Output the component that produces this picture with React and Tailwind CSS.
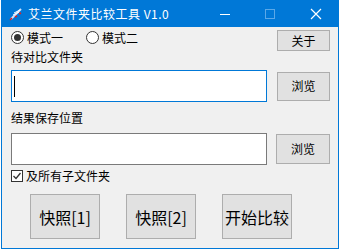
import React from 'react';

const font = { fontFamily: '"Noto Sans CJK SC", "Noto Sans", sans-serif' };

const Btn = ({ className, children }) => (
  <div className={`flex items-center justify-center bg-[#e1e1e1] border border-[#adadad] text-black ${className}`}>
    {children}
  </div>
);

const App = () => {
  return (
    <div className="w-[342px] h-[252px] bg-white pl-[1px]" style={font}>
      <div className="w-[338px] h-[249px] border border-[#0078d7] bg-[#f0f0f0] flex flex-col">
        {/* title bar */}
        <div className="h-[26px] bg-[#0078d7] flex items-center text-white">
          <svg width="14" height="14" viewBox="0 0 14 14" className="ml-[7px]">
            <path d="M2 12 L12 2" stroke="#cfe3ff" strokeWidth="2" />
            <path d="M5 6 L11 3 M4 8 L10 5" stroke="#ffffff" strokeWidth="1" />
            <path d="M1 13 L3 11 M6 10 L8 9 M10 7 L12 6" stroke="#e02020" strokeWidth="1.5" />
          </svg>
          <span className="ml-[5px] text-[12px] leading-[12px] tracking-[0.5px]">艾兰文件夹比较工具 V1.0</span>
          <div className="ml-auto flex items-center">
            <div className="w-[10px] h-[1px] bg-white mr-[35px]"></div>
            <div className="w-[10px] h-[10px] border border-[#5aa8e8] mr-[35px]"></div>
            <svg width="12" height="12" viewBox="0 0 12 12" className="mr-[16px]">
              <path d="M1 1 L11 11 M11 1 L1 11" stroke="#fff" strokeWidth="1.2" />
            </svg>
          </div>
        </div>

        {/* body */}
        <div className="flex-1 pl-[9px] pr-[8px] text-[12px] leading-[12px] text-black">
          <div className="flex justify-between mt-[3px]">
            <div className="flex flex-col">
              <div className="flex items-center mt-[1px]">
                <div className="w-[13px] h-[13px] rounded-full border border-[#333] bg-white flex items-center justify-center">
                  <div className="w-[7px] h-[7px] rounded-full bg-[#333]"></div>
                </div>
                <span className="ml-[3px]">模式一</span>
                <div className="ml-[23px] w-[13px] h-[13px] rounded-full border border-[#333] bg-white"></div>
                <span className="ml-[3px]">模式二</span>
              </div>
              <span className="mt-[7px]">待对比文件夹</span>
            </div>
            <Btn className="w-[53px] h-[21px]">关于</Btn>
          </div>

          <div className="flex items-center justify-between mt-[7px]">
            <div className="w-[256px] h-[32px] border border-[#0078d7] bg-white flex items-center">
              <div className="ml-[2px] w-[1px] h-[21px] bg-black"></div>
            </div>
            <Btn className="w-[53px] h-[29px]">浏览</Btn>
          </div>

          <div className="mt-[10px]">结果保存位置</div>

          <div className="flex items-center justify-between mt-[9px]">
            <div className="w-[256px] h-[32px] border border-[#7a7a7a] bg-white"></div>
            <Btn className="w-[54px] h-[30px]">浏览</Btn>
          </div>

          <div className="flex items-center mt-[5px]">
            <div className="w-[12px] h-[12px] border border-[#333] bg-white flex items-center justify-center">
              <svg width="10" height="10" viewBox="0 0 10 10">
                <path d="M1.5 5 L4 7.5 L8.5 2" stroke="#333" strokeWidth="1.3" fill="none" />
              </svg>
            </div>
            <span className="ml-[3px]">及所有子文件夹</span>
          </div>

          <div className="flex mt-[12px] ml-[19px] gap-[26px]">
            <Btn className="w-[70px] h-[45px] text-[16px]">快照[1]</Btn>
            <Btn className="w-[70px] h-[45px] text-[16px]">快照[2]</Btn>
            <Btn className="w-[70px] h-[45px] text-[16px]">开始比较</Btn>
          </div>
        </div>
      </div>
    </div>
  );
};

export default App;
